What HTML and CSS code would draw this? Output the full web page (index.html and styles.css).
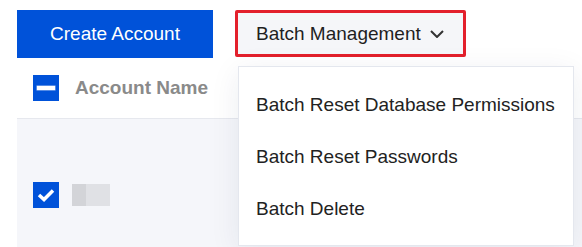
FILE: index.html
```html
<!DOCTYPE html>
<html lang="en">
<head>
<meta charset="utf-8">
<link rel="stylesheet" href="styles.css">
</head>
<body>
<div class="toolbar">
  <button class="btn-primary">Create Account</button>
  <div class="dropdown">
    <button class="btn-batch">
      <span>Batch Management</span>
      <svg class="chev" width="14" height="8" viewBox="0 0 14 8"><path d="M1 1 L7 7 L13 1" fill="none" stroke="#333" stroke-width="2"/></svg>
    </button>
    <ul class="menu">
      <li>Batch Reset Database Permissions</li>
      <li>Batch Reset Passwords</li>
      <li>Batch Delete</li>
    </ul>
  </div>
</div>
<div class="table">
  <div class="thead">
    <span class="cb cb-ind"><span class="dash"></span></span>
    <span class="th">Account Name</span>
  </div>
  <div class="trow">
    <span class="cb cb-checked">
      <svg width="18" height="14" viewBox="0 0 18 14"><path d="M2 7 L7 11.5 L16 2.5" fill="none" stroke="#fff" stroke-width="3.5"/></svg>
    </span>
    <span class="ph"><span class="ph-a"></span><span class="ph-b"></span></span>
  </div>
</div>
</body>
</html>
```

FILE: styles.css
```css
* { box-sizing: border-box; }
html, body { margin: 0; padding: 0; background: #fff; }
body {
  font-family: "Liberation Sans", Arial, sans-serif;
  width: 582px;
  height: 247px;
  overflow: hidden;
}
.toolbar {
  display: flex;
  align-items: flex-start;
  gap: 22px;
  padding: 10px 0 0 17px;
  height: 58px;
}
.btn-primary {
  width: 196px;
  height: 48px;
  background: #0052d9;
  color: #fff;
  border: none;
  font-family: "Liberation Sans", Arial, sans-serif;
  font-size: 19px;
  padding: 0;
}
.dropdown { position: relative; }
.btn-batch {
  display: flex;
  align-items: center;
  width: 231px;
  height: 47px;
  background: #f5f6f9;
  border: 3px solid #e3202c;
  border-radius: 2px;
  padding: 0 0 0 18px;
  font-family: "Liberation Sans", Arial, sans-serif;
  font-size: 19px;
  color: #1f1f1f;
}
.chev { margin-left: 9px; }
.menu {
  position: absolute;
  top: 56px;
  left: 3px;
  width: 336px;
  height: 180px;
  margin: 0;
  padding: 12px 0;
  list-style: none;
  background: #fff;
  border: 1px solid #e4e7ee;
  box-shadow: 0 6px 28px rgba(30, 40, 80, 0.08);
  z-index: 2;
}
.menu li {
  height: 52px;
  line-height: 52px;
  padding-left: 17px;
  font-size: 19px;
  color: #222;
  white-space: nowrap;
}
.table { margin-left: 17px; }
.thead {
  display: flex;
  align-items: center;
  height: 61px;
  padding-left: 16px;
  border-bottom: 1px solid #e6e8ee;
  background: #fff;
}
.th {
  margin-left: 16px;
  font-weight: bold;
  font-size: 19px;
  color: #8a8a8a;
}
.cb {
  display: flex;
  align-items: center;
  justify-content: center;
  width: 26px;
  height: 26px;
  background: #0052d9;
  flex: none;
}
.dash {
  width: 18px;
  height: 4px;
  background: #fff;
  box-shadow: 0 0 0 0.5px #a9c4f2;
}
.trow {
  display: flex;
  align-items: flex-start;
  height: 128px;
  padding: 63px 0 0 16px;
  background: #f5f6fa;
}
.ph { display: flex; margin: 2px 0 0 13px; height: 22px; }
.ph-a { width: 14px; background: #d3d4d8; }
.ph-b { width: 24px; background: #e0e1e5; }
```
